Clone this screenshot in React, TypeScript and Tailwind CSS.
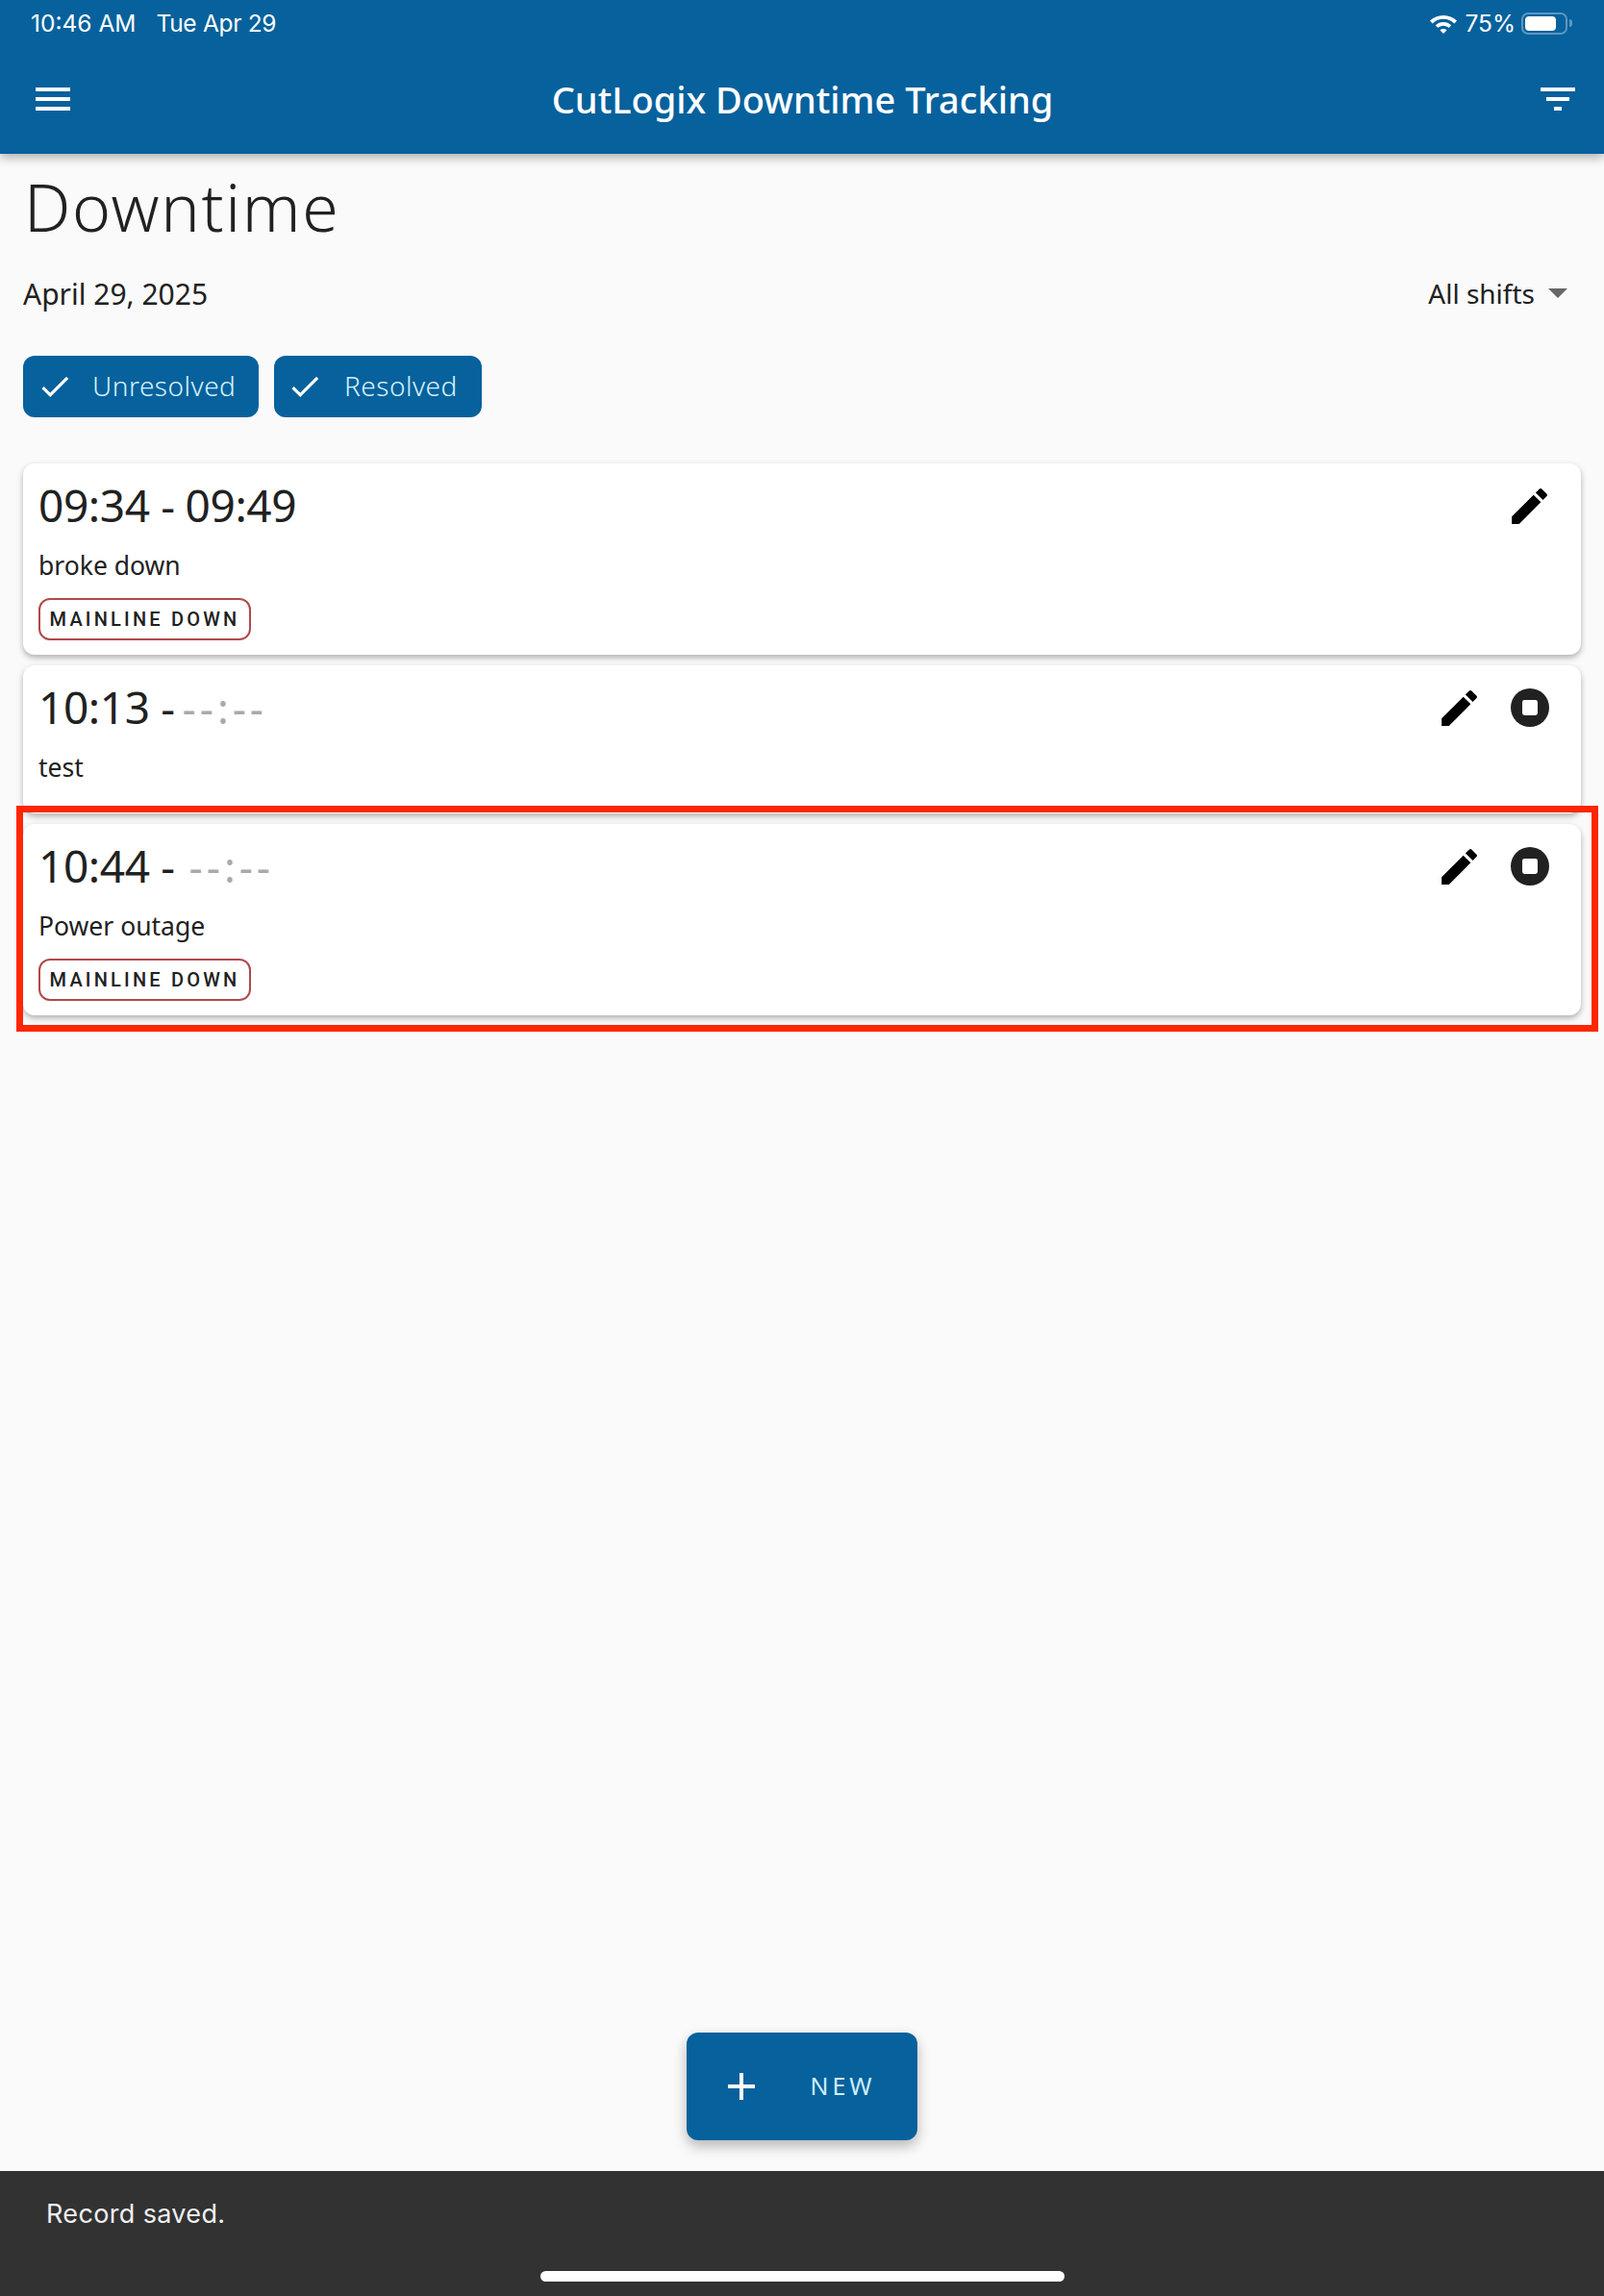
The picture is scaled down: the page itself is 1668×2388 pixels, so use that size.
const PENCIL = "M3 17.25V21h3.75L17.81 9.94l-3.75-3.75L3 17.25zM20.71 7.04a1 1 0 0 0 0-1.41l-2.34-2.34a1 1 0 0 0-1.41 0l-1.83 1.83 3.75 3.75 1.83-1.83z";

function PencilIcon() {
  return (
    <svg className="w-[49px] h-[49px] text-black" viewBox="0 0 24 24" fill="currentColor">
      <path d={PENCIL} />
    </svg>
  );
}

function StopIcon() {
  return (
    <svg className="w-[48px] h-[48px]" viewBox="0 0 24 24">
      <circle cx="12" cy="12" r="10" fill="#212121" />
      <rect x="8" y="8" width="8" height="8" rx="1.2" fill="#ffffff" />
    </svg>
  );
}

function CheckIcon() {
  return (
    <svg className="w-[38px] h-[38px] shrink-0" viewBox="0 0 24 24" fill="#ffffff">
      <path d="M9 16.17 4.83 12l-1.42 1.41L9 19 21 7l-1.41-1.41z" />
    </svg>
  );
}

function StatusBar() {
  return (
    <div className="h-[48px] flex items-center justify-between pl-[32px] pr-[33px] text-[24.5px] text-white font-['Inter',sans-serif]">
      <div className="flex gap-[21px]">
        <span>10:46 AM</span>
        <span className="tracking-[-0.3px]">Tue Apr 29</span>
      </div>
      <div className="flex items-center">
        <svg className="w-[30px] h-[22px]" viewBox="0 0 30 22" fill="#ffffff">
          <path d="M15 3C9.500 3 4.600 5.100 1 8.600l2.600 2.800C6.600 8.500 10.600 6.800 15 6.800s8.400 1.700 11.400 4.600L29 8.600C25.400 5.100 20.500 3 15 3z" />
          <path d="M15 10c-3.200 0-6.100 1.200-8.300 3.300l2.600 2.800c1.500-1.400 3.500-2.300 5.700-2.300s4.200.9 5.700 2.300l2.600-2.800C21.100 11.200 18.200 10 15 10z" />
          <path d="M15 17c-1.400 0-2.600.5-3.500 1.400L15 22l3.500-3.600C17.600 17.500 16.400 17 15 17z" />
        </svg>
        <span className="ml-[7px]">75%</span>
        <div className="ml-[6px] w-[48px] h-[23px] rounded-[7px] border-2 border-[#5a97c2] p-[2px]">
          <div className="w-[32px] h-full rounded-[4px] bg-white" />
        </div>
        <div className="ml-[2px] w-[3px] h-[8px] rounded-r-full bg-[#5a97c2]" />
      </div>
    </div>
  );
}

function AppBar() {
  return (
    <header className="relative z-10 h-[160px] bg-[#07619c] shadow-[0_4px_10px_rgba(0,0,0,0.3)]">
      <StatusBar />
      <div className="h-[110px] flex items-center justify-between pl-[31px] pr-[24px]">
        <svg className="w-[48px] h-[48px]" viewBox="0 0 24 24" fill="#ffffff">
          <path d="M3 18h18v-2H3v2zm0-5h18v-2H3v2zm0-7v2h18V6H3z" />
        </svg>
        <h1 className="text-[38px] font-medium text-white mr-[6px]">CutLogix Downtime Tracking</h1>
        <svg className="w-[48px] h-[48px]" viewBox="0 0 24 24" fill="#ffffff">
          <path d="M10 18h4v-2h-4v2zM3 6v2h18V6H3zm3 7h12v-2H6v2z" />
        </svg>
      </div>
    </header>
  );
}

function Chip({ label, className }: { label: string; className: string }) {
  return (
    <div className={`h-[64px] flex items-center rounded-[12px] bg-[#07619c] ${className}`}>
      <CheckIcon />
      <span className="relative -top-[1px] text-[28px] font-light tracking-[0.5px] text-[#d6f3fd]">{label}</span>
    </div>
  );
}

function Tag() {
  return (
    <div className="mt-[13px] w-[221px] h-[44px] flex items-center justify-center rounded-[12px] border-2 border-[#b04a4a] text-[20px] leading-none font-medium tracking-[3.2px] text-[#212121] font-['Roboto',sans-serif]">
      MAINLINE DOWN
    </div>
  );
}

function RecordCard({ start, end, note, tag, running, marked, gap }: {
  start: string;
  end?: string;
  note: string;
  tag?: boolean;
  running?: boolean;
  marked?: boolean;
  gap?: string;
}) {
  return (
    <div className={`relative bg-white rounded-[12px] pl-[16px] pr-[29px] pt-[10px] shadow-[0_3px_6px_rgba(0,0,0,0.3)] ${tag ? "pb-[15px]" : "pb-[27px]"}`}>
      <div className="h-[68px] flex items-center justify-between">
        <div className="flex items-center text-[46px] tracking-[-0.4px] text-[#212121]">
          <span className="relative -top-[1px]">{start} -</span>
          {end ? <span className="relative -top-[1px] ml-[11px]">{end}</span> : <span className={`${gap} text-[44px] tracking-[4px] text-[#aaaaaa]`}>--:--</span>}
        </div>
        <div className="flex items-center gap-[25px]">
          <PencilIcon />
          {running && <StopIcon />}
        </div>
      </div>
      <div className="mt-[9px] h-[40px] flex items-center text-[26.5px] text-[#212121]">{note}</div>
      {tag && <Tag />}
      {marked && (
        <div className="absolute z-20 -left-[7px] -right-[18px] -top-[19px] -bottom-[17px] border-[7px] border-[#ff2600] pointer-events-none" />
      )}
    </div>
  );
}

export default function App() {
  return (
    <div className="min-h-[2388px] flex flex-col bg-[#fafafa] font-['Noto_Sans',sans-serif]">
      <AppBar />
      <main className="flex-1 flex flex-col px-[24px]">
        <h2 className="mt-[15px] ml-[1px] h-[80px] flex items-center text-[68px] font-light tracking-[1.7px] text-[#212121]">Downtime</h2>
        <div className="mt-[30px] h-[40px] flex items-center justify-between text-[30px] text-[#212121]">
          <span>April 29, 2025</span>
          <div className="flex items-center pr-[14px]">
            <span className="text-[28px]">All shifts</span>
            <div className="ml-[14px] w-0 h-0 border-x-[10px] border-x-transparent border-t-[10px] border-t-[#666666]" />
          </div>
        </div>
        <div className="mt-[45px] flex gap-[16px]">
          <Chip label="Unresolved" className="w-[245px] pl-[14px] gap-[20px]" />
          <Chip label="Resolved" className="w-[216px] pl-[13px] gap-[22px]" />
        </div>
        <div className="mt-[48px] flex flex-col gap-[11px]">
          <RecordCard start="09:34" end="09:49" note="broke down" tag />
          <RecordCard start="10:13" note="test" running gap="ml-[8px]" />
          <RecordCard start="10:44" note="Power outage" tag running marked gap="ml-[15px]" />
        </div>
        <button className="mt-auto mb-[32px] self-center w-[240px] h-[112px] flex items-center justify-center gap-[47px] pr-[10px] rounded-[12px] bg-[#07619c] shadow-[0_6px_14px_rgba(0,0,0,0.28)]">
          <svg className="w-[48px] h-[48px]" viewBox="0 0 24 24" fill="#ffffff">
            <path d="M19 13h-6v6h-2v-6H5v-2h6V5h2v6h6v2z" />
          </svg>
          <span className="text-[25px] font-normal tracking-[4px] text-[#cfeefc]">NEW</span>
        </button>
      </main>
      <footer className="h-[130px] bg-[#323232] flex flex-col items-center">
        <div className="w-full pl-[48px] pt-[25px] h-[104px] text-[27px] tracking-[0.35px] text-[#f0f0f0] font-['Inter',sans-serif]">Record saved.</div>
        <div className="w-[545px] h-[11px] rounded-full bg-white" />
      </footer>
    </div>
  );
}
